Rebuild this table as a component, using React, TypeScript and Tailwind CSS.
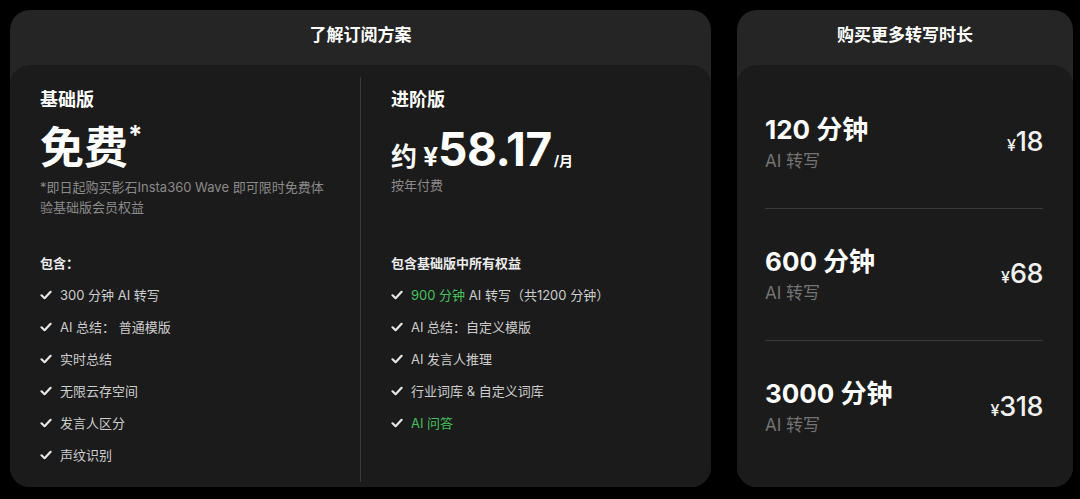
import type { ReactNode } from "react";

const green = "text-[#45c25d]";

const basicFeatures: ReactNode[] = [
  "300 分钟 AI 转写",
  "AI 总结： 普通模版",
  "实时总结",
  "无限云存空间",
  "发言人区分",
  "声纹识别",
];

const proFeatures: ReactNode[] = [
  <>
    <span className={green}>900 分钟</span> AI 转写（共1200 分钟）
  </>,
  "AI 总结：自定义模版",
  "AI 发言人推理",
  "行业词库 & 自定义词库",
  <span className={green}>AI 问答</span>,
];

const packs = [
  { minutes: "120 分钟", price: "18" },
  { minutes: "600 分钟", price: "68" },
  { minutes: "3000 分钟", price: "318" },
];

function CheckIcon() {
  return (
    <svg width="12" height="12" viewBox="0 0 12 12" fill="none" className="shrink-0 text-[#e6e6e6]">
      <path d="M1.5 6.3 4.6 9.2 10.6 2.8" stroke="currentColor" strokeWidth="2.2" strokeLinecap="round" strokeLinejoin="round" />
    </svg>
  );
}

function FeatureList({ title, items }: { title: string; items: ReactNode[] }) {
  return (
    <div>
      <h3 className="text-[13px] leading-5 font-bold text-[#ececec]">{title}</h3>
      <ul className="mt-3 flex flex-col gap-3">
        {items.map((item, i) => (
          <li key={i} className="flex items-center gap-2 text-[13px] leading-5 text-[#cdcdcd]">
            <CheckIcon />
            <span className="whitespace-nowrap">{item}</span>
          </li>
        ))}
      </ul>
    </div>
  );
}

export default function App() {
  return (
    <div className="h-[499px] w-[1080px] bg-black flex gap-[26px] pl-[10px] pt-[10px] pb-[12px] font-['Inter','Noto_Sans_CJK_SC',sans-serif]">
      {/* subscription plans */}
      <section className="w-[701px] rounded-[20px] bg-[#252525] flex flex-col">
        <div className="h-[55px] flex items-center justify-center pb-[3px]">
          <h2 className="text-[17px] font-bold text-white">了解订阅方案</h2>
        </div>
        <div className="flex-1 rounded-[20px] bg-[#1b1b1b] flex">
          <div className="w-[350px] pl-[30px] pt-[23px]">
            <div className="h-[165px]">
              <div className="text-[18px] leading-6 font-bold text-white">基础版</div>
              <div className="mt-[10px] text-[44px] leading-[52px] font-bold text-white">
                免费<span className="align-top text-[26px] leading-none">*</span>
              </div>
              <p className="mt-[3px] text-[13px] leading-5 text-[#8a8a8a] whitespace-nowrap">
                *即日起购买影石Insta360 Wave 即可限时免费体
                <br />
                验基础版会员权益
              </p>
            </div>
            <FeatureList title="包含：" items={basicFeatures} />
          </div>

          <div className="w-px bg-[#3a3a3a] mt-[12px] mb-[5px]" />

          <div className="flex-1 pl-[30px] pt-[23px]">
            <div className="h-[165px]">
              <div className="text-[18px] leading-6 font-bold text-white">进阶版</div>
              <div className="mt-[14px] flex items-baseline text-white leading-none">
                <span className="text-[26px] font-bold">约 ¥</span>
                <span className="text-[46px] font-bold tracking-[-0.5px]">58.17</span>
                <span className="ml-[2px] text-[14px] font-bold">/月</span>
              </div>
              <p className="mt-[3px] text-[13px] leading-5 text-[#8a8a8a]">按年付费</p>
            </div>
            <FeatureList title="包含基础版中所有权益" items={proFeatures} />
          </div>
        </div>
      </section>

      {/* extra minutes */}
      <section className="w-[336px] rounded-[20px] bg-[#252525] flex flex-col">
        <div className="h-[55px] flex items-center justify-center pb-[3px]">
          <h2 className="text-[17px] font-bold text-white">购买更多转写时长</h2>
        </div>
        <div className="flex-1 rounded-[20px] bg-[#1b1b1b] pl-[28px] pr-[30px] pt-[12px]">
          {packs.map((p, i) => (
            <div
              key={p.minutes}
              className={`h-[132px] flex items-center justify-between ${i < packs.length - 1 ? "border-b border-[#3a3a3a]" : ""}`}
            >
              <div>
                <div className="text-[26px] leading-[34px] font-bold text-white">{p.minutes}</div>
                <div className="mt-[2px] text-[17px] leading-6 text-[#747474]">AI 转写</div>
              </div>
              <div className="flex items-baseline text-[#f0f0f0]">
                <span className="text-[16px] font-medium">¥</span>
                <span className="text-[27px] font-medium tracking-[-0.5px]">{p.price}</span>
              </div>
            </div>
          ))}
        </div>
      </section>
    </div>
  );
}
